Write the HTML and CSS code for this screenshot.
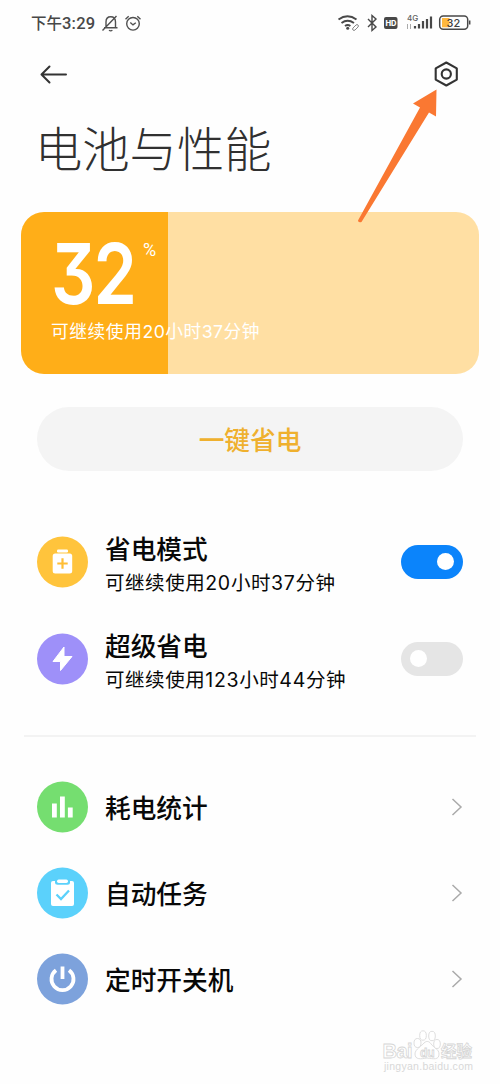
FILE: index.html
```html
<!DOCTYPE html>
<html lang="zh-CN">
<head>
<meta charset="utf-8">
<title>电池与性能</title>
<link rel="stylesheet" href="styles.css">
</head>
<body>
<main class="screen">
  <header class="status">
    <span class="clock">下午<span class="clock-num">3:29</span></span>
    <svg class="status-left" width="44" height="20" viewBox="0 0 44 20" fill="none" stroke="#505050" stroke-width="1.4">
      <path d="M3 14.800h13.500M5 14V9Q5 3.800 9.700 3.800T14.500 9V14M8 17.300q1.700 1.200 3.400 0M1.500 17.500 15.500 3"/>
      <circle cx="32" cy="10.800" r="6.300"/>
      <path d="M29.300 9.500 32 11.900 34.800 9.800M24.500 6.300l3.200-3M36.300 3.300l3.200 3"/>
    </svg>
    <svg class="status-right" width="136" height="24" viewBox="336 11 136 24" fill="none" stroke="#484848">
      <g stroke-width="1.900"><path d="M338.500 19.500q9-6.500 18 0M341.500 23q6-4.500 12.500 0"/><path d="M345 26q2.700-2 5.400 0" /></g>
      <circle cx="347.700" cy="28.300" r="1.500" fill="#484848" stroke="none"/>
      <path stroke="#888" stroke-width="1" d="m353 28 3-3q1-1 2 0t0 2l-1 1M355 26l-2 2q-1 1 0 2t2 0l2-2"/>
      <path stroke-width="1.400" d="M368 19l8 8-4 3.500v-15l4 3.500-8 8"/>
      <rect x="384" y="17" width="13.500" height="12" rx="2" fill="#484848" stroke="none"/>
      <text class="hd" x="385.500" y="25.900">HD</text>
      <text class="g4" x="407" y="20.500">4G</text>
      <path stroke="#aaa" stroke-width="1" d="M407.500 24v5M410.500 24v5"/>
      <path stroke-width="2.200" d="M415 26v2.500M419 24v4.500M423 21v7.500M427 19v9.500M431 16.500v12"/>
      <rect x="442" y="18" width="7.500" height="9.300" fill="#ffb83d" stroke="none"/>
      <rect x="439.700" y="16" width="28" height="13.200" rx="3.500" stroke-width="1.500"/>
      <path stroke-width="1.500" d="M469.700 20.500v4"/>
      <text class="level" x="446.500" y="26.600">32</text>
    </svg>
  </header>

  <nav class="nav">
    <svg width="28" height="22" viewBox="0 0 28 22" fill="none" stroke="#333" stroke-width="2" stroke-linecap="round" stroke-linejoin="round"><path d="M26 11.500H1.500M9.500 3.500 1.500 11.500l8 8"/></svg>
    <svg width="26" height="28" viewBox="0 0 26 28" fill="none" stroke="#333" stroke-width="2.100" stroke-linejoin="round"><path d="M13.300 2.500 23.800 8.400V19.600L13.300 25.500 2.700 19.600V8.400Z"/><circle cx="13.300" cy="14" r="4.600"/></svg>
  </nav>
  <svg class="pointer" width="84" height="136" viewBox="0 0 84 136"><path fill="#fa7832" d="M78.500 1.500 55 15.500 62 19.500 0 132.500Q0 135 3.500 134L71 24.500 78 28.500Z"/></svg>

  <h1 class="title">电池与性能</h1>

  <section class="battery">
    <div class="percent"><span class="value">32</span><span class="unit">%</span></div>
    <p class="remain">可继续使用<span class="num">20</span>小时<span class="num">37</span>分钟</p>
  </section>

  <button class="save">一键省电</button>

  <section class="modes">
    <div class="row mode">
      <svg class="icon" viewBox="0 0 52 52"><circle cx="25.500" cy="26" r="25.500" fill="#ffc43c"/><rect x="20" y="13.500" width="11" height="3" rx="1.200" fill="#fff"/><rect x="15.700" y="17.500" width="19.500" height="20" rx="2.500" fill="#fff"/><path d="M25.500 22.300v10.400M20.300 27.500h10.400" stroke="#ffbe35" stroke-width="2.200"/></svg>
      <div class="copy"><h2 class="name">省电模式</h2><p class="detail">可继续使用<span class="num">20</span>小时<span class="num">37</span>分钟</p></div>
      <span class="switch on"></span>
    </div>
    <div class="row mode">
      <svg class="icon" viewBox="0 0 52 52"><circle cx="25.500" cy="26" r="25.500" fill="#9e90f9"/><path fill="#fff" stroke="#fff" stroke-linejoin="round" d="M27 14 16 28.500H23.500V37.500L35 23.500H27Z"/></svg>
      <div class="copy"><h2 class="name">超级省电</h2><p class="detail">可继续使用<span class="num">123</span>小时<span class="num">44</span>分钟</p></div>
      <span class="switch"></span>
    </div>
  </section>

  <section class="links">
    <div class="row link">
      <svg class="icon" viewBox="0 0 52 52"><circle cx="25.500" cy="26" r="25.500" fill="#75de70"/><path d="M17.400 22.500v14M25.400 15.500v21M33.300 26.500v10" stroke="#fff" stroke-width="4.800"/></svg>
      <h2 class="name">耗电统计</h2>
      <svg class="chevron" viewBox="0 0 12 18"><path d="m1.500 1 8.500 8-8.500 8"/></svg>
    </div>
    <div class="row link">
      <svg class="icon" viewBox="0 0 52 52"><circle cx="25.500" cy="26" r="25.500" fill="#5bd1fb"/><rect x="14" y="14" width="23" height="25" rx="2" fill="#fff"/><rect x="18" y="11" width="15" height="6.800" rx="2.500" fill="#5bd1fb"/><rect x="20" y="12.500" width="11" height="3.500" rx="1.700" fill="#fff"/><path d="m19.500 27.500 4.500 4.500 8-8.500" fill="none" stroke="#5bd1fb" stroke-width="2.300"/></svg>
      <h2 class="name">自动任务</h2>
      <svg class="chevron" viewBox="0 0 12 18"><path d="m1.500 1 8.500 8-8.500 8"/></svg>
    </div>
    <div class="row link">
      <svg class="icon" viewBox="0 0 52 52"><circle cx="25.500" cy="26" r="25.500" fill="#7da2dc"/><path d="M19 17.300A11 11 0 1 0 32 17.300M25.500 13.500V26" fill="none" stroke="#fff" stroke-width="3.800"/></svg>
      <h2 class="name">定时开关机</h2>
      <svg class="chevron" viewBox="0 0 12 18"><path d="m1.500 1 8.500 8-8.500 8"/></svg>
    </div>
  </section>

  <svg class="watermark" width="100" height="52" viewBox="380 1026 100 52">
    <g class="outline">
      <text class="wm-big" x="382.500" y="1058" textLength="30">Bai</text>
      <path d="M415 1054c0-5 7-8 9-11 3-3 6-1 7 1 3 4 8 5 8 10 0 6-5 5-12 4-6 1-12 2-12-4Z"/>
      <ellipse cx="417.500" cy="1043" rx="3.500" ry="4.500"/><ellipse cx="423" cy="1035.500" rx="3.300" ry="4.700"/><ellipse cx="432" cy="1036" rx="3.300" ry="4.700"/><ellipse cx="437" cy="1044" rx="3.300" ry="4.500"/>
      <text class="wm-du" x="420" y="1056.500">du</text>
      <text class="wm-cn" x="441" y="1057" textLength="31">经验</text>
    </g>
    <text class="wm-url" x="384" y="1070" textLength="89">jingyan.baidu.com</text>
  </svg>
</main>
</body>
</html>
```

FILE: styles.css
```css
* { box-sizing: border-box; }
body { margin: 0; background: #fefefe; color: #080808; font-family: "Noto Sans CJK SC", sans-serif; }
h1, h2, p { margin: 0; }
.screen { position: relative; width: 500px; height: 1084px; overflow: hidden; }

.status { display: flex; align-items: center; height: 46px; padding: 0 28px 0 31px; }
.clock { color: #484848; font-size: 15.500px; font-weight: 500; white-space: nowrap; width: 65px; margin-top: -2px; }
.clock-num { font-family: Roboto, sans-serif; font-size: 16.500px; letter-spacing: .2px; }
.status-left { margin-left: 5px; }
.status-right { margin-left: auto; }
.hd { font: 800 7.500px Inter, sans-serif; fill: #fff; stroke: none; }
.g4 { font: 500 8px Inter, sans-serif; fill: #606060; stroke: none; }
.level { font: 500 11px Inter, sans-serif; fill: #404040; stroke: none; }

.nav { display: flex; justify-content: space-between; align-items: center; height: 56px; padding: 0 41px 0 40px; }
.pointer { position: absolute; left: 358px; top: 88px; z-index: 2; }

.title { height: 92px; padding-left: 35px; line-height: 90px; font-size: 47.300px; font-weight: 300; color: #303030; }

.battery { margin: 18px 21px 0; height: 162px; border-radius: 23px; padding: 22px 30px 0; color: #fff; background: linear-gradient(to right, #ffae18 0 147px, #ffdfa3 147px); }
.percent { display: flex; align-items: flex-start; height: 79px; }
.value { width: 92px; font-family: Inter, sans-serif; font-size: 84px; font-weight: 600; line-height: 79px; letter-spacing: -2.500px; font-feature-settings: "cv09"; transform: scaleX(.83); transform-origin: left; }
.unit { font-family: Roboto, sans-serif; font-size: 18px; line-height: 32px; }
.remain { font-size: 17.700px; letter-spacing: .6px; line-height: 34px; white-space: nowrap; }
.num { font-family: Inter, sans-serif; letter-spacing: .4px; }

.save { display: block; width: 426px; height: 64px; margin: 33px auto 0; border: 0; border-radius: 32px; background: #f4f4f4; color: #efb02e; font: 500 25.700px "Noto Sans CJK SC", sans-serif; padding: 0 6px 2px; }

.modes { margin: 0 24px; padding: 42px 13px 28px; border-bottom: 2px solid #f3f3f3; }
.row { display: flex; align-items: center; }
.icon { width: 52px; height: 52px; flex: none; }
.copy { flex: 1; padding-top: 5px; }
.name { flex: 1; font-size: 25.700px; font-weight: 500; line-height: 36px; }
.row > .name, .copy { padding-left: 16px; }
.mode { height: 97px; }
.detail { font-size: 19.500px; line-height: 31px; letter-spacing: .55px; white-space: nowrap; }
.detail .num { letter-spacing: .7px; }
.switch { display: flex; width: 62px; height: 34px; padding: 8px 9px; border-radius: 17px; background: #e5e5e5; }
.switch::after { content: ""; width: 17px; height: 17px; border-radius: 50%; background: #fff; }
.switch.on { justify-content: flex-end; background: #0b84fb; }

.links { padding: 27px 37px 0; }
.link { height: 86px; }
.chevron { width: 12px; height: 18px; fill: none; stroke: #aaa; stroke-width: 1.500; }

.watermark { position: absolute; left: 380px; top: 1026px; }
.outline { fill: #fff; stroke: #d6d6d6; stroke-width: .8; }
.wm-big { font: 700 20px "Liberation Sans", sans-serif; }
.wm-du { font: 700 12px "Liberation Sans", sans-serif; }
.wm-cn { font: 700 15.500px "Noto Sans CJK SC", sans-serif; }
.wm-url { font: 10.500px "Liberation Sans", sans-serif; fill: #d8d8d8; }
```
